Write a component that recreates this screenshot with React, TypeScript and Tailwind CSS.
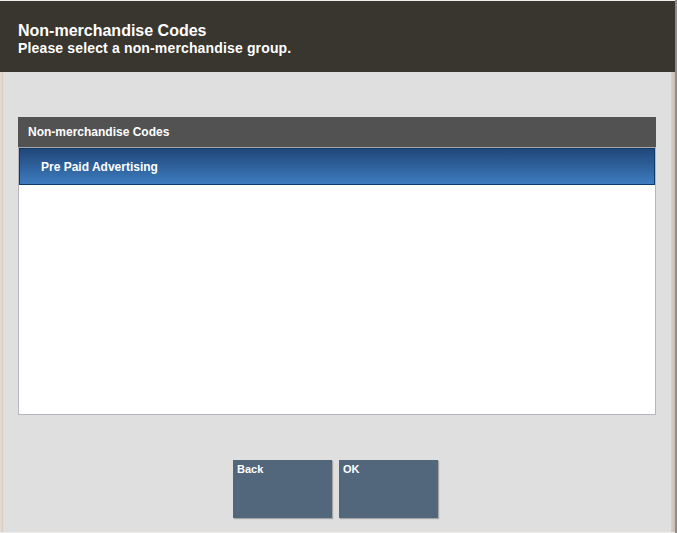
export default function App() {
  return (
    <div
      className="relative w-[677px] h-[533px] overflow-hidden bg-[#f0eeec]"
      style={{ fontFamily: '"Liberation Sans", Arial, sans-serif' }}
    >
      <div className="absolute left-0 top-[1px] w-[675px] h-[531px] flex flex-col bg-[#dfdfdf]">
        {/* title bar */}
        <div className="h-[71px] bg-[#39352f] px-[18px] pt-[21px] text-white font-bold">
          <div className="text-[16px] leading-[18px]">Non-merchandise Codes</div>
          <div className="text-[14px] leading-[17px] tracking-[0.15px]">Please select a non-merchandise group.</div>
        </div>

        <div className="flex flex-1 min-h-0">
          <div className="w-[3px] bg-gradient-to-r from-[#e8e2dc] to-[#d4c9c0]" />
          <div className="flex-1 flex flex-col pl-[15px] pr-[12px] pt-[45px]">
            {/* list panel */}
            <div className="w-[638px] flex flex-col">
              <div className="h-[31px] bg-[#525252] border-b border-[#a9a9a9] flex items-center pl-[10px] text-white font-bold text-[12px]">
                Non-merchandise Codes
              </div>
              <div className="h-[267px] bg-white border border-t-0 border-[#b5b5bd] flex flex-col">
                <div className="h-[37px] bg-gradient-to-b from-[#21477a] to-[#3d7cbf] border border-[#0e3a68] flex items-center pl-[21px] text-white font-bold text-[12px]">
                  Pre Paid Advertising
                </div>
              </div>
            </div>

            {/* buttons */}
            <div className="flex gap-[7px] mt-[45px] ml-[215px]">
              <button className="w-[99px] h-[58px] bg-[#52667c] shadow-[1px_1px_1px_rgba(0,0,0,0.25)] text-white font-bold text-[11px] text-left flex items-start px-[4px] pt-[1px]">
                Back
              </button>
              <button className="w-[99px] h-[58px] bg-[#52667c] shadow-[1px_1px_1px_rgba(0,0,0,0.25)] text-white font-bold text-[11px] text-left flex items-start px-[4px] pt-[1px]">
                OK
              </button>
            </div>
          </div>
          <div className="w-[4px] bg-gradient-to-r from-[#d8cfc8] to-[#c9bdb4]" />
        </div>
      </div>
      <div className="absolute right-0 top-0 w-[2px] h-full bg-[#8c8c8c]" />
    </div>
  );
}
